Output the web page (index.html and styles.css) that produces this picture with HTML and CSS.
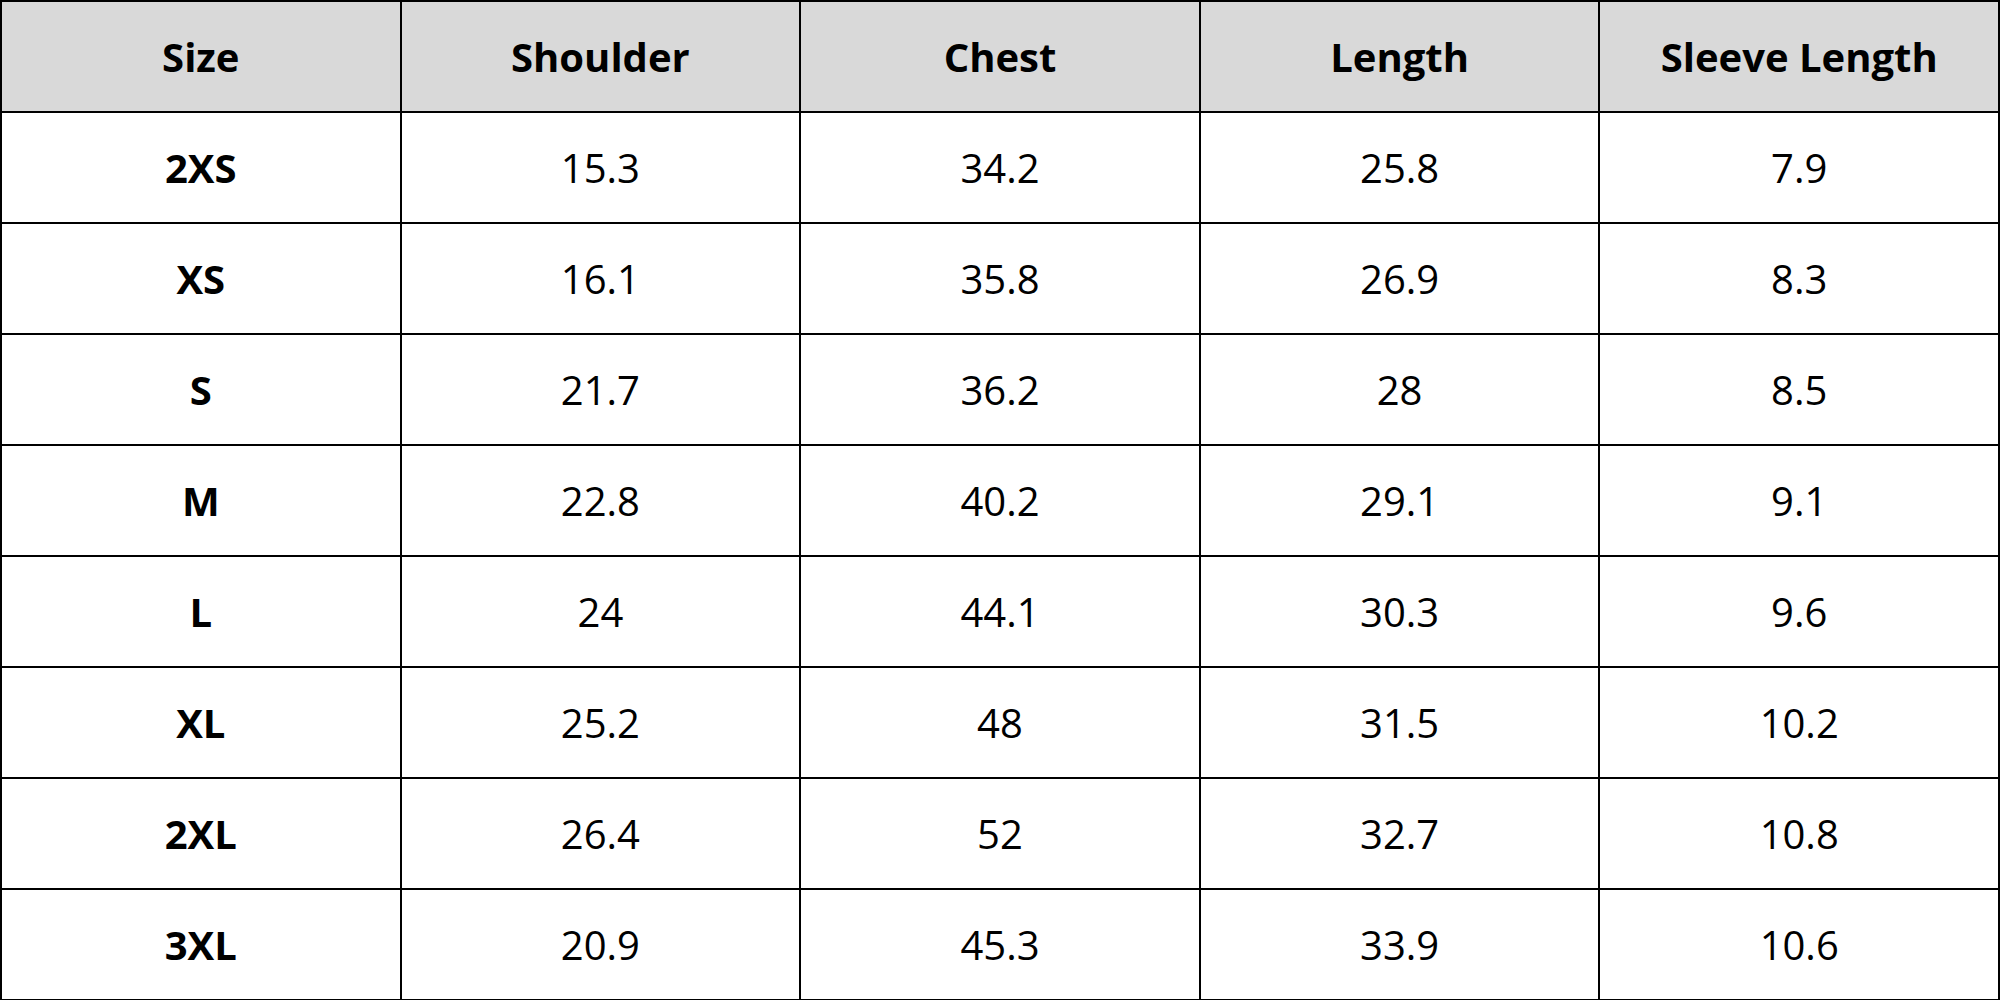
FILE: index.html
```html
<!DOCTYPE html>
<html>
<head>
<meta charset="utf-8">
<link rel="stylesheet" href="styles.css">
</head>
<body>
<table class="size-table">
  <thead>
    <tr><th>Size</th><th>Shoulder</th><th>Chest</th><th>Length</th><th>Sleeve Length</th></tr>
  </thead>
  <tbody>
    <tr><th>2XS</th><td>15.3</td><td>34.2</td><td>25.8</td><td>7.9</td></tr>
    <tr><th>XS</th><td>16.1</td><td>35.8</td><td>26.9</td><td>8.3</td></tr>
    <tr><th>S</th><td>21.7</td><td>36.2</td><td>28</td><td>8.5</td></tr>
    <tr><th>M</th><td>22.8</td><td>40.2</td><td>29.1</td><td>9.1</td></tr>
    <tr><th>L</th><td>24</td><td>44.1</td><td>30.3</td><td>9.6</td></tr>
    <tr><th>XL</th><td>25.2</td><td>48</td><td>31.5</td><td>10.2</td></tr>
    <tr><th>2XL</th><td>26.4</td><td>52</td><td>32.7</td><td>10.8</td></tr>
    <tr><th>3XL</th><td>20.9</td><td>45.3</td><td>33.9</td><td>10.6</td></tr>
  </tbody>
</table>
</body>
</html>
```
FILE: styles.css
```css
html, body {
  margin: 0;
  padding: 0;
  background: #ffffff;
  overflow: hidden;
}
.size-table {
  width: 2000px;
  border-collapse: collapse;
  table-layout: fixed;
  font-family: "Open Sans", "Liberation Sans", sans-serif;
  color: #000;
}
.size-table th,
.size-table td {
  border: 2px solid #000;
  text-align: center;
  vertical-align: middle;
  padding: 0;
  height: 109px;
  font-size: 40px;
  line-height: 1;
}
.size-table th {
  font-weight: 700;
}
.size-table td {
  font-weight: 400;
}
.size-table thead th {
  background: #d9d9d9;
}
```
